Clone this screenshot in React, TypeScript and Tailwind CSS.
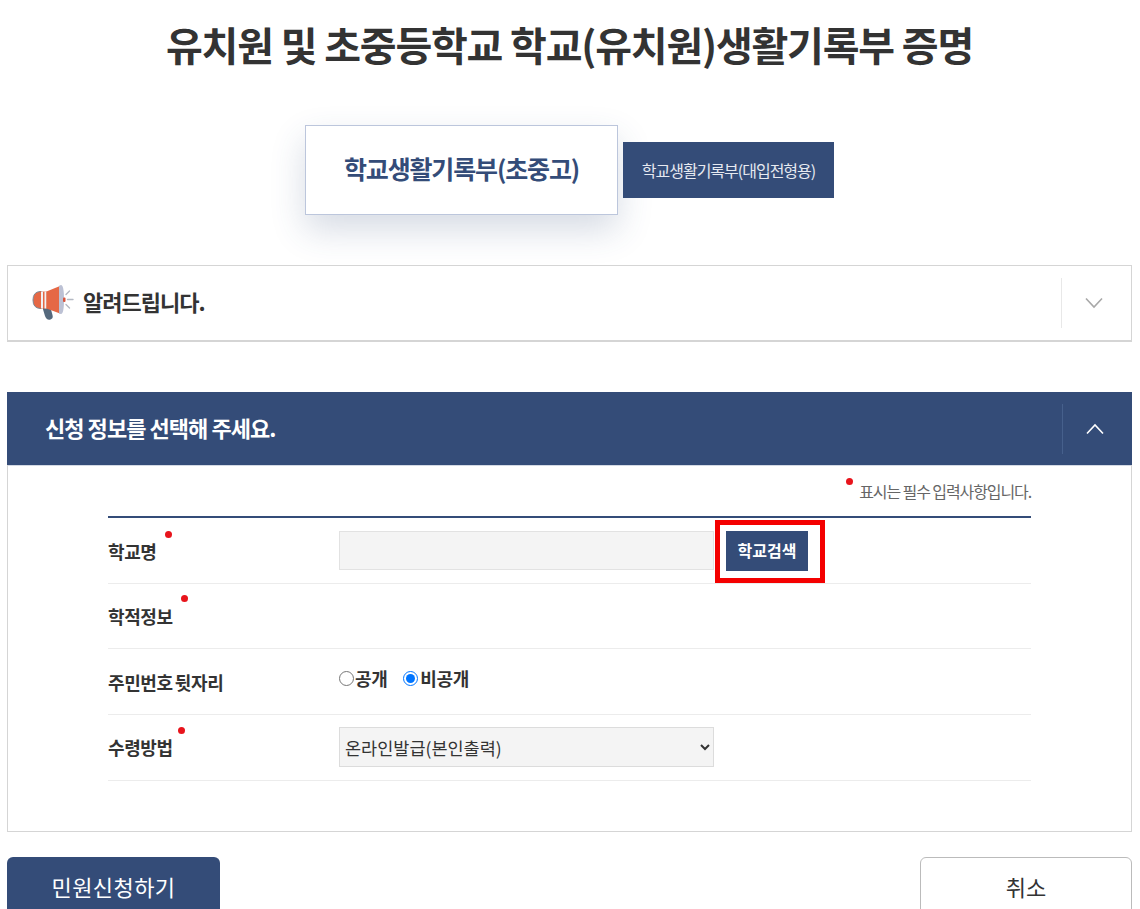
const navy = 'bg-[#344c78]';
const label = 'text-[18px] leading-[28px] font-bold tracking-[-0.4px] [word-spacing:-1.5px] text-[#333]';

function Dot({ className }: { className: string }) {
    return <span className={`absolute w-[7px] h-[7px] rounded-full bg-[#e8141c] ${className}`} />;
}

function Megaphone() {
    return (
        <svg width="50" height="45" viewBox="0 0 50 45" fill="none">
            <path d="M14 26 L17 36 Q18.5 40.5 22.5 39.5 Q25.5 38.5 24.5 35 L22 26 Z" fill="#55697d" />
            <path d="M12 11.5 Q5 12 5 20 Q5 28 12 28.5 L14 28.5 L14 11.5 Z" fill="#e56845" stroke="#7a8794" strokeWidth="1" />
            <path d="M12 11.5 L19 11.5 L19 28.5 L12 28.5 Z" fill="#e56845" />
            <path d="M13 11.5 L15 11.5 L15 28.5 L13 28.5 Z M16.5 11.5 L18.5 11.5 L18.5 28.5 L16.5 28.5 Z" fill="#f1f1f4" />
            <path d="M18.5 11.5 L32 6 L32 33.5 L18.5 28.5 Z" fill="#e56845" />
            <path d="M33 5 Q36 5 36 19.5 Q36 34 33 34 Q31 34 31 32.5 L31 6.5 Q31 5 33 5 Z" fill="#bcc1d4" />
            <rect x="35" y="17.5" width="2.5" height="4.5" rx="1" fill="#d9543c" />
            <path d="M38 14.5 L41.5 11 M39.5 19.5 L45 19.5 M38 24.5 L41.5 28" stroke="#b4b9c3" strokeWidth="1.4" strokeLinecap="round" />
        </svg>
    );
}

function Chevron({ up, color }: { up?: boolean; color: string }) {
    return (
        <svg width="20" height="12" viewBox="0 0 20 12" fill="none">
            <path d={up ? 'M2 10.5 L10 2 L18 10.5' : 'M2 1.5 L10 10 L18 1.5'} stroke={color} strokeWidth="1.6" />
        </svg>
    );
}

export default function App() {
    return (
        <div className="h-[909px] overflow-hidden bg-white px-[7px] text-[#333] font-['Noto_Sans_CJK_KR','Noto_Sans',sans-serif]">
            <div className="w-[1125px]">
                <h1 className="h-[125px] pt-[14px] text-center text-[40px] leading-[60px] font-bold tracking-[-1.2px] text-[#333]">
                    유치원 및 초중등학교 학교(유치원)생활기록부 증명
                </h1>

                <div className="flex items-center h-[90px] pl-[298px] gap-[5px]">
                    <div className="w-[313px] h-[90px] pb-[2px] flex items-center justify-center bg-white border border-[#bcc6dc] shadow-[0_15px_35px_rgba(52,76,120,0.2)] text-[25px] font-bold tracking-[-1.15px] text-[#344c78]">
                        학교생활기록부(초중고)
                    </div>
                    <div className={`w-[211px] h-[56px] pb-[1px] flex items-center justify-center ${navy} text-[16px] tracking-[-1px] text-[#e6e9f0]`}>
                        학교생활기록부(대입전형용)
                    </div>
                </div>

                <div className="mt-[50px] h-[77px] pb-[1px] flex items-center border border-[#d5d5d5] border-b-2 bg-white">
                    <div className="ml-[20px] mr-[5px]">
                        <Megaphone />
                    </div>
                    <div className="flex-1 pb-[2px] text-[22px] font-bold tracking-[-1px] text-[#333]">알려드립니다.</div>
                    <div className="w-[70px] h-[50px] pr-[6px] flex items-center justify-center border-l border-[#e8e8e8]">
                        <Chevron color="#a8a8a8" />
                    </div>
                </div>

                <div className={`mt-[50px] h-[73px] flex items-center ${navy}`}>
                    <div className="flex-1 pl-[38px] pb-[2px] text-[22px] font-bold tracking-[-0.95px] text-white">신청 정보를 선택해 주세요.</div>
                    <div className="w-[70px] h-[50px] pr-[6px] flex items-center justify-center border-l border-[#46608c]">
                        <Chevron up color="#ffffff" />
                    </div>
                </div>

                <div className="h-[367px] border border-t-0 border-[#d5d5d5] px-[100px]">
                    <div className="relative -mx-[100px] px-[100px] h-[51px] pb-[1px] flex items-center justify-end border-t border-[#d3d9e4] text-[16px] tracking-[-1.1px] text-[#666]">
                        <Dot className="right-[278px] top-[12px]" />
                        표시는 필수 입력사항입니다.
                    </div>
                    <div className="border-t-2 border-[#344c78]">
                        <div className="flex h-[66px] border-b border-[#ececec]">
                            <div className={`relative w-[231px] pt-[19px] ${label}`}>
                                학교명
                                <Dot className="left-[57px] top-[13px]" />
                            </div>
                            <div className="relative flex items-start pt-[13px]">
                                <input className="w-[375px] h-[39px] bg-[#f4f4f4] border border-[#e2e2e2]" readOnly />
                                <button className={`relative ml-[12px] w-[82px] h-[40px] pb-[2px] ${navy} text-[16px] font-bold text-white`}>
                                    학교검색
                                </button>
                                <span className="absolute left-[376px] top-[2px] w-[110px] h-[63px] border-[5px] border-[#f40000]" />
                            </div>
                        </div>
                        <div className="flex h-[65px] border-b border-[#ececec]">
                            <div className={`relative w-[231px] pt-[18px] ${label}`}>
                                학적정보
                                <Dot className="left-[73px] top-[11px]" />
                            </div>
                        </div>
                        <div className="flex h-[66px] border-b border-[#ececec]">
                            <div className={`w-[231px] pt-[19px] ${label}`}>주민번호 뒷자리</div>
                            <div className={`flex items-start pt-[15px] ${label}`}>
                                <label className="flex items-center">
                                    <input type="radio" name="rrn" className="m-0 w-[15px] h-[15px] mr-px" />
                                    공개
                                </label>
                                <label className="flex items-center ml-[16px]">
                                    <input type="radio" name="rrn" defaultChecked className="m-0 w-[15px] h-[15px] mr-[2px]" />
                                    비공개
                                </label>
                            </div>
                        </div>
                        <div className="flex h-[66px] border-b border-[#ececec]">
                            <div className={`relative w-[231px] pt-[18px] ${label}`}>
                                수령방법
                                <Dot className="left-[70px] top-[12px]" />
                            </div>
                            <div className="pt-[12px]">
                                <select className="w-[375px] h-[40px] pl-[1px] bg-[#f4f4f4] border border-[#dcdcdc] text-[17.5px] text-[#333]" style={{ appearance: 'auto' }}>
                                    <option>온라인발급(본인출력)</option>
                                </select>
                            </div>
                        </div>
                    </div>
                </div>

                <div className="mt-[25px] flex justify-between">
                    <button className={`w-[213px] h-[64px] pb-[5px] rounded-t-[6px] ${navy} text-[22px] tracking-[0.4px] text-white`}>민원신청하기</button>
                    <button className="w-[212px] h-[64px] pb-[5px] rounded-t-[6px] border border-[#bbb] bg-white text-[22px] text-[#333]">취소</button>
                </div>
            </div>
        </div>
    );
}
